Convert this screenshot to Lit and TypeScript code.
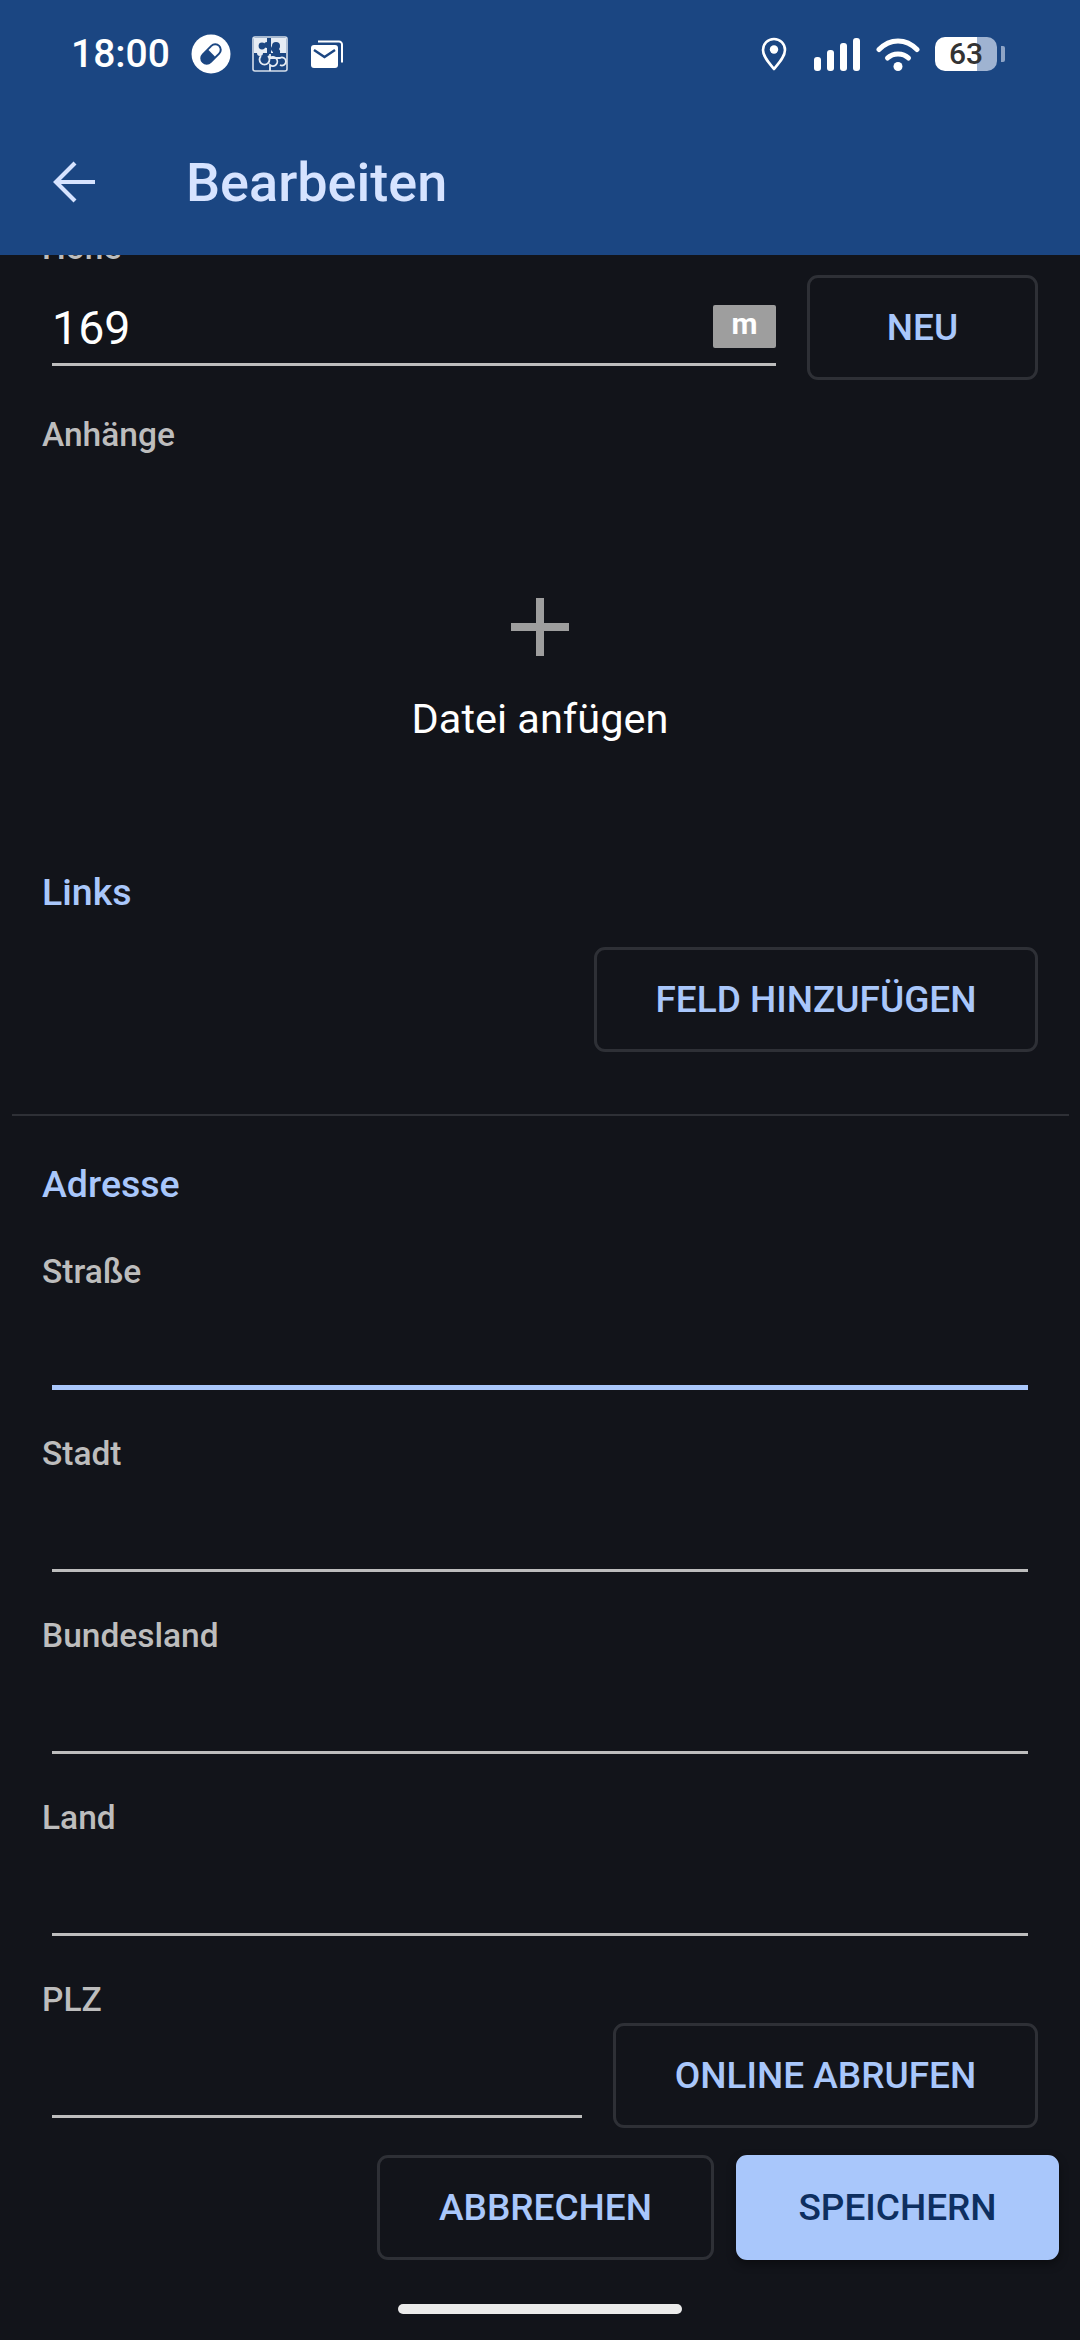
import { LitElement, html, css } from "lit";
import { customElement } from "lit/decorators.js";

const pill = html`<svg class="ic" width="40" height="40" viewBox="0 0 40 40">
  <circle cx="20" cy="20" r="19.5" fill="#fff"/>
  <g transform="rotate(-45 20 20)">
    <rect x="7.5" y="13.5" width="25" height="13" rx="6.5" fill="#1b4682"/>
    <path d="M21 15.5h5a4.5 4.5 0 0 1 0 9h-5z" fill="#fff"/>
  </g>
</svg>`;

const puzzle = html`<svg class="ic" width="36" height="36" viewBox="0 0 36 36">
  <rect x="1" y="1" width="34" height="34" rx="2" fill="none" stroke="#d5deea" stroke-width="1.6"/>
  <path d="M2 2h13v4a3 3 0 0 0 0 6v5h-4a3 3 0 0 1-6 0H2z" fill="#e6ecf4"/>
  <path d="M19 2h15v15h-6a4 4 0 0 0-1-4 4 4 0 1 0-6 3v1h-2z" fill="#e6ecf4"/>
  <circle cx="10" cy="10" r="3.4" fill="#1b4682"/>
  <circle cx="24" cy="10" r="4" fill="#1b4682"/>
  <path d="M9 20a5 5 0 1 0 7 0M18 18v4a4.500 4.500 0 1 1 0 7v6M18 22h10a4 4 0 1 1 0 7" fill="none" stroke="#e6ecf4" stroke-width="1.8"/>
</svg>`;

const mail = html`<svg class="ic" width="33" height="28" viewBox="0 0 33 28">
  <path d="M7 1.500h21a3 3 0 0 1 3 3v18" fill="none" stroke="#fff" stroke-width="2"/>
  <rect x="0" y="5" width="27" height="23" rx="3" fill="#fff"/>
  <path d="M3 10l10.500 7L24 10" fill="none" stroke="#1b4682" stroke-width="2.400"/>
</svg>`;

const pin = html`<svg class="ic" width="26" height="34" viewBox="0 0 26 34">
  <path d="M13 2C6.800 2 2 6.800 2 13c0 6.500 6 13 11 19 5-6 11-12.500 11-19C24 6.800 19.200 2 13 2z" fill="none" stroke="#fff" stroke-width="2.600" stroke-linejoin="round"/>
  <circle cx="13" cy="12.500" r="4.200" fill="#fff"/>
</svg>`;

const signal = html`<svg class="ic" width="46" height="33" viewBox="0 0 46 33">
  <rect x="0" y="19" width="7" height="14" rx="3" fill="#fff"/>
  <rect x="13" y="12" width="7" height="21" rx="3" fill="#fff"/>
  <rect x="26" y="5" width="7" height="28" rx="3" fill="#fff"/>
  <rect x="39" y="0" width="7" height="33" rx="3" fill="#fff"/>
</svg>`;

const wifi = html`<svg class="ic" width="44" height="33" viewBox="0 0 44 33">
  <path d="M3 11.500C14 0 30 0 41 11.500" fill="none" stroke="#fff" stroke-width="5" stroke-linecap="round"/>
  <path d="M11.500 20C17 14.500 27 14.500 32.500 20" fill="none" stroke="#fff" stroke-width="5" stroke-linecap="round"/>
  <circle cx="22" cy="28.500" r="4.500" fill="#fff"/>
</svg>`;

const arrow = html`<svg class="ic" width="44" height="44" viewBox="0 0 44 44">
  <path d="M43 22H4M23 3L4 22l19 19" fill="none" stroke="#d6e3ff" stroke-width="4.200"/>
</svg>`;

@customElement("app-root")
export class AppRoot extends LitElement {
  static styles = css`
    :host {
      display: flex;
      flex-direction: column;
      width: 1080px;
      height: 2340px;
      overflow: hidden;
      background: #12141a;
      font-family: Roboto, "Noto Sans", sans-serif;
      color: #fff;
    }
    .ic { display: block; flex: none; }

    /* App bar */
    .appbar { flex: none; height: 255px; background: #1b4682; position: relative; z-index: 2; }
    .status { height: 108px; display: flex; align-items: center; padding: 0 75px 0 71px; }
    .time { font-size: 39px; font-weight: 500; line-height: 40px; width: 120px; }
    .notif { display: flex; align-items: center; }
    .notif .puzzle { margin-left: 21px; }
    .notif .mail { margin-left: 23px; }
    .spacer { flex: 1; }
    .sys { display: flex; align-items: center; }
    .sys .sig { margin-left: 27px; }
    .sys .wf { margin-left: 16px; }
    .battery { margin-left: 15px; display: flex; align-items: center; gap: 4px; }
    .batt-body {
      width: 62px; height: 34px; border-radius: 10px;
      background: linear-gradient(90deg, #fff 0 42px, #9fb3d1 42px 62px);
      color: #333; font-size: 30px; font-weight: 500; line-height: 34px; text-align: center;
    }
    .batt-nub { width: 4px; height: 16px; border-radius: 0 2px 2px 0; background: #8ea4c6; }
    .toolbar { height: 147px; display: flex; align-items: center; padding-left: 52px; }
    .title { margin-left: 90px; font-size: 54px; font-weight: 500; color: #d6e3ff; line-height: 60px; padding-top: 3px; }

    /* Scroll area */
    .main { flex: 1; min-height: 0; overflow: hidden; }
    .scroll { margin-top: -27px; }
    .label { font-size: 33.5px; font-weight: 500; line-height: 40px; height: 40px; color: #bdbdbd; margin-left: 42px; }
    .heading { font-size: 37.5px; font-weight: 500; line-height: 40px; height: 40px; color: #a9c7fb; margin-left: 42px; }
    .input { margin-left: 52px; height: 98px; border-bottom: 3px solid #bdbdbd; box-sizing: border-box; display: flex; align-items: flex-end; justify-content: space-between; }
    .input.focus { border-bottom: 5px solid #a9c7fb; }
    .field { padding-bottom: 44px; padding-right: 52px; }
    .row { display: flex; padding-right: 42px; gap: 31px; }
    .row .grow { flex: 1; min-width: 0; }
    .value { font-size: 46.5px; line-height: 52px; color: #fff; margin-bottom: 9px; }
    .unit {
      width: 63px; height: 43px; border-radius: 2px; background: #9e9e9e; color: #fff;
      font-size: 30px; font-weight: 700; line-height: 38px; text-align: center; margin-bottom: 15px;
    }
    .btn {
      box-sizing: border-box; height: 105px; border: 3px solid #2e3036; border-radius: 11px;
      display: flex; align-items: center; justify-content: center;
      font-size: 37px; font-weight: 500; color: #a9c7fb; flex: none;
    }
    .btn.primary { background: #a9c7fb; border-color: #a9c7fb; color: #0e2f60; box-shadow: 0 4px 10px rgba(0, 0, 0, 0.4); }
    .hoehe { height: 152px; margin-bottom: 35px; }
    .hoehe .btn { margin-top: 47px; width: 231px; }
    .attach { height: 417px; display: flex; flex-direction: column; align-items: center; }
    .plus { margin-top: 143px; }
    .attach-text { margin-top: 38px; font-size: 41.5px; line-height: 50px; color: #fff; }
    .links { display: flex; justify-content: flex-end; padding-right: 42px; margin-top: 35px; }
    .links .btn { width: 444px; }
    .divider { height: 2px; background: #2e3036; margin: 62px 11px 48px 12px; }
    .adresse { margin-bottom: 48px; }
    .plz .btn { margin-top: 43px; width: 425px; }

    /* Footer */
    .footer { flex: none; display: flex; justify-content: flex-end; gap: 22px; padding: 0 21px 0 0; height: 185px; }
    .footer .cancel { width: 337px; }
    .footer .save { width: 323px; }
    .home { position: absolute; left: 398px; top: 2304px; width: 284px; height: 10px; border-radius: 5px; background: #ebebeb; }
  `;

  private field(label: string, focus = false) {
    return html`<div class="field">
      <div class="label">${label}</div>
      <div class="input ${focus ? "focus" : ""}"></div>
    </div>`;
  }

  render() {
    return html`
      <div class="appbar">
        <div class="status">
          <div class="time">18:00</div>
          <div class="notif">
            ${pill}
            <div class="puzzle">${puzzle}</div>
            <div class="mail">${mail}</div>
          </div>
          <div class="spacer"></div>
          <div class="sys">
            ${pin}
            <div class="sig">${signal}</div>
            <div class="wf">${wifi}</div>
            <div class="battery">
              <div class="batt-body">63</div>
              <div class="batt-nub"></div>
            </div>
          </div>
        </div>
        <div class="toolbar">
          ${arrow}
          <div class="title">Bearbeiten</div>
        </div>
      </div>

      <div class="main">
        <div class="scroll">
          <div class="row hoehe">
            <div class="grow">
              <div class="label">Höhe</div>
              <div class="input">
                <span class="value">169</span>
                <span class="unit">m</span>
              </div>
            </div>
            <div class="btn">NEU</div>
          </div>

          <div class="label">Anhänge</div>
          <div class="attach">
            <svg class="ic plus" width="58" height="58" viewBox="0 0 58 58">
              <path d="M25 0h8v25h25v8H33v25h-8V33H0v-8h25z" fill="#9e9e9e"/>
            </svg>
            <div class="attach-text">Datei anfügen</div>
          </div>

          <div class="heading">Links</div>
          <div class="links"><div class="btn">FELD HINZUFÜGEN</div></div>
          <div class="divider"></div>

          <div class="heading adresse">Adresse</div>
          ${this.field("Straße", true)}
          ${this.field("Stadt")}
          ${this.field("Bundesland")}
          ${this.field("Land")}

          <div class="row plz">
            <div class="grow">
              <div class="label">PLZ</div>
              <div class="input"></div>
            </div>
            <div class="btn">ONLINE ABRUFEN</div>
          </div>
        </div>
      </div>

      <div class="footer">
        <div class="btn cancel">ABBRECHEN</div>
        <div class="btn primary save">SPEICHERN</div>
      </div>
      <div class="home"></div>
    `;
  }
}
